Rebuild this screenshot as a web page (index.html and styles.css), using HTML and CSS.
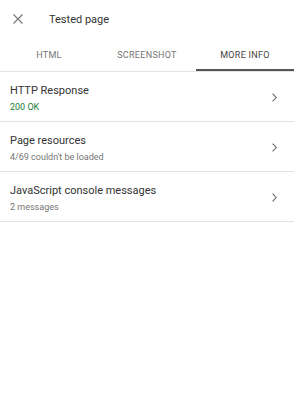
FILE: index.html
```html
<!DOCTYPE html>
<html lang="en">
<head>
    <meta charset="UTF-8">
    <meta name="viewport" content="width=device-width, initial-scale=1.0">
    <title>Tested page</title>
    <link rel="stylesheet" href="styles.css">
</head>
<body>
    <header class="topbar">
        <button class="close-btn" type="button" aria-label="Close">
            <svg width="10" height="10" viewBox="0 0 10 10">
                <path d="M0.5 0.5 L9.5 9.5 M9.5 0.5 L0.5 9.5" stroke="#757575" stroke-width="1.1" fill="none"/>
            </svg>
        </button>
        <span class="topbar-title">Tested page</span>
    </header>

    <nav class="tabs">
        <div class="tab">HTML</div>
        <div class="tab">SCREENSHOT</div>
        <div class="tab tab-active">MORE INFO</div>
    </nav>

    <ul class="info-list">
        <li class="info-row">
            <div class="info-text">
                <div class="info-title">HTTP Response</div>
                <div class="info-sub info-ok">200 OK</div>
            </div>
            <svg class="chevron" width="5" height="9" viewBox="0 0 5 9">
                <path d="M0.6 0.6 L4.2 4.5 L0.6 8.4" stroke="#666" stroke-width="1.1" fill="none"/>
            </svg>
        </li>
        <li class="info-row">
            <div class="info-text">
                <div class="info-title">Page resources</div>
                <div class="info-sub">4/69 couldn't be loaded</div>
            </div>
            <svg class="chevron" width="5" height="9" viewBox="0 0 5 9">
                <path d="M0.6 0.6 L4.2 4.5 L0.6 8.4" stroke="#666" stroke-width="1.1" fill="none"/>
            </svg>
        </li>
        <li class="info-row">
            <div class="info-text">
                <div class="info-title">JavaScript console messages</div>
                <div class="info-sub">2 messages</div>
            </div>
            <svg class="chevron" width="5" height="9" viewBox="0 0 5 9">
                <path d="M0.6 0.6 L4.2 4.5 L0.6 8.4" stroke="#666" stroke-width="1.1" fill="none"/>
            </svg>
        </li>
    </ul>
</body>
</html>
```

FILE: styles.css
```css
body {
    margin: 0;
    padding: 0;
    background-color: #fff;
    font-family: Roboto, "Liberation Sans", sans-serif;
    color: #333;
}

.topbar {
    display: flex;
    align-items: center;
    height: 38px;
}

.close-btn {
    width: 37px;
    height: 38px;
    padding: 0 0 0 13px;
    margin: 0 12px 0 0;
    border: none;
    background: none;
    display: flex;
    align-items: center;
}

.topbar-title {
    font-size: 11px;
    color: #333;
}

.tabs {
    display: flex;
    height: 33px;
    border-bottom: 1px solid #e3e3e3;
}

.tab {
    flex: 1;
    display: flex;
    align-items: center;
    justify-content: center;
    padding-top: 1px;
    font-size: 9px;
    letter-spacing: 0.3px;
    color: #757575;
}

.tab-active {
    color: #444;
    box-shadow: inset 0 -2px 0 #555;
}

.info-list {
    list-style: none;
    margin: 0;
    padding: 0;
}

.info-row {
    display: flex;
    align-items: center;
    height: 49px;
    padding: 0 17px 0 10px;
    border-bottom: 1px solid #e3e3e3;
}

.info-text {
    flex: 1;
    padding-top: 4px;
}

.chevron {
    margin-top: 2px;
}

.info-title {
    font-size: 11px;
    color: #333;
    line-height: 14px;
}

.info-sub {
    font-size: 9px;
    color: #757575;
    line-height: 12px;
    margin-top: 3px;
}

.info-ok {
    color: #188038;
}
```
